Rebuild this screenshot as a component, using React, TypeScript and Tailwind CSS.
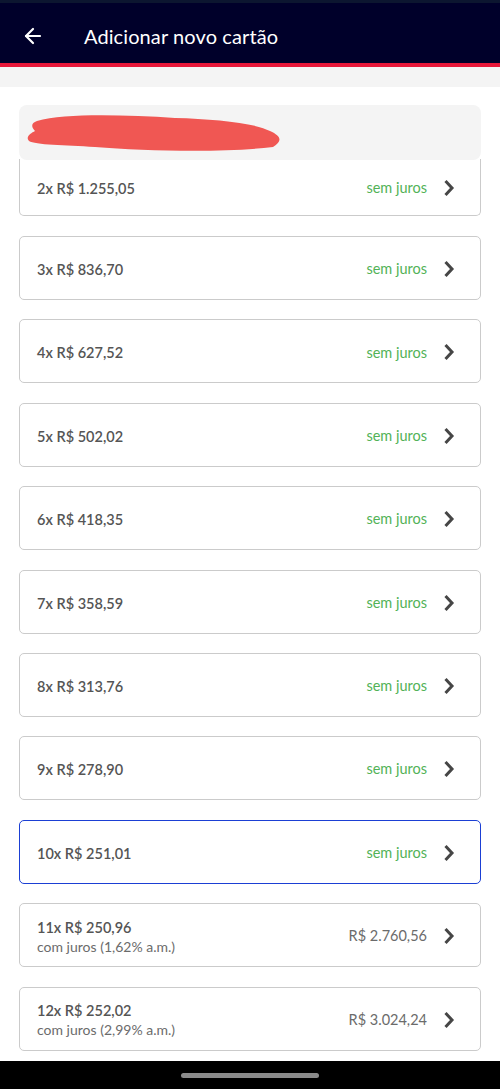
import { ArrowLeft } from "lucide-react";

type Parcela = {
  n: number;
  valor: string;
  juros?: string;
  total?: string;
};

const parcelas: Parcela[] = [
  { n: 3, valor: "836,70" },
  { n: 4, valor: "627,52" },
  { n: 5, valor: "502,02" },
  { n: 6, valor: "418,35" },
  { n: 7, valor: "358,59" },
  { n: 8, valor: "313,76" },
  { n: 9, valor: "278,90" },
  { n: 10, valor: "251,01" },
  { n: 11, valor: "250,96", juros: "1,62", total: "2.760,56" },
  { n: 12, valor: "252,02", juros: "2,99", total: "3.024,24" },
];

const selecionada = 10;

function Chevron() {
  return (
    <svg width="12" height="18" viewBox="0 0 12 18" className="text-[#464646]">
      <path d="M2.5 2 L9 9 L2.5 16" fill="none" stroke="currentColor" strokeWidth="3" strokeLinejoin="miter" />
    </svg>
  );
}

function RowContent({ p }: { p: Parcela }) {
  return (
    <>
      <div className="flex flex-col pt-[3px]">
        <span className="text-[14.5px] font-semibold text-[#555555] leading-[19px]">
          {p.n}x R$ {p.valor}
        </span>
        {p.juros && (
          <span className="text-[14px] text-[#6b6b6b] leading-[19px]">com juros ({p.juros}% a.m.)</span>
        )}
      </div>
      <div className="flex items-center gap-[16px] pt-[2px]">
        {p.total ? (
          <span className="text-[14.5px] text-[#6b6b6b]">R$ {p.total}</span>
        ) : (
          <span className="text-[14.5px] text-[#52b257]">sem juros</span>
        )}
        <Chevron />
      </div>
    </>
  );
}

export default function App() {
  return (
    <div className="w-[500px] h-[1089px] bg-white flex flex-col overflow-hidden" style={{ fontFamily: "Lato, 'Noto Sans', sans-serif" }}>
      {/* Header */}
      <div className="h-[3px] bg-[#0c1630]" />
      <header className="h-[60px] bg-[#00002a] flex items-center pt-[5px]">
        <ArrowLeft className="ml-[21px] w-[24px] h-[24px] text-white" strokeWidth={2.2} />
        <h1 className="ml-[39px] text-[20px] text-white tracking-[0.1px]">Adicionar novo cartão</h1>
      </header>
      <div className="h-[4px] bg-[#e8173a]" />
      <div className="h-[20px] bg-[#f4f4f4]" />

      {/* Content */}
      <main className="flex-1 px-[19px] pt-[18px]">
        <div className="h-[55px] rounded-[8px] bg-[#f4f4f4] relative z-10">
          <svg className="absolute left-[6px] top-[6px]" width="270" height="44" viewBox="0 0 270 44">
            <path
              d="M12 10 C 40 2, 100 4, 150 7 C 190 8, 230 12, 245 20 C 256 25, 258 30, 248 36 C 200 42, 120 40, 70 36 C 40 34, 10 34, 4 30 C 0 26, 6 22, 10 20 C 6 16, 6 12, 12 10 Z"
              fill="#f05753"
            />
          </svg>
        </div>

        <div className="h-[57px] -mt-[1px] border-x-[1.5px] border-b-[1.5px] border-[#cbcbcb] rounded-b-[5px] flex items-center justify-between pl-[17px] pr-[25px]">
          <RowContent p={{ n: 2, valor: "1.255,05" }} />
        </div>

        <div className="mt-[20px] flex flex-col gap-[19.4px]">
          {parcelas.map((p) => (
            <div
              key={p.n}
              className={
                p.n === selecionada
                  ? "h-[64px] border-[1.5px] border-[#1b3fd4] rounded-[5px] flex items-center justify-between pl-[17px] pr-[25px]"
                  : "h-[64px] border-[1.5px] border-[#cbcbcb] rounded-[5px] flex items-center justify-between pl-[17px] pr-[25px]"
              }
            >
              <RowContent p={p} />
            </div>
          ))}
        </div>
      </main>

      {/* Nav bar */}
      <div className="h-[28px] bg-black flex items-center justify-center">
        <div className="w-[138px] h-[5px] rounded-full bg-[#8a8a8a]" />
      </div>
    </div>
  );
}
